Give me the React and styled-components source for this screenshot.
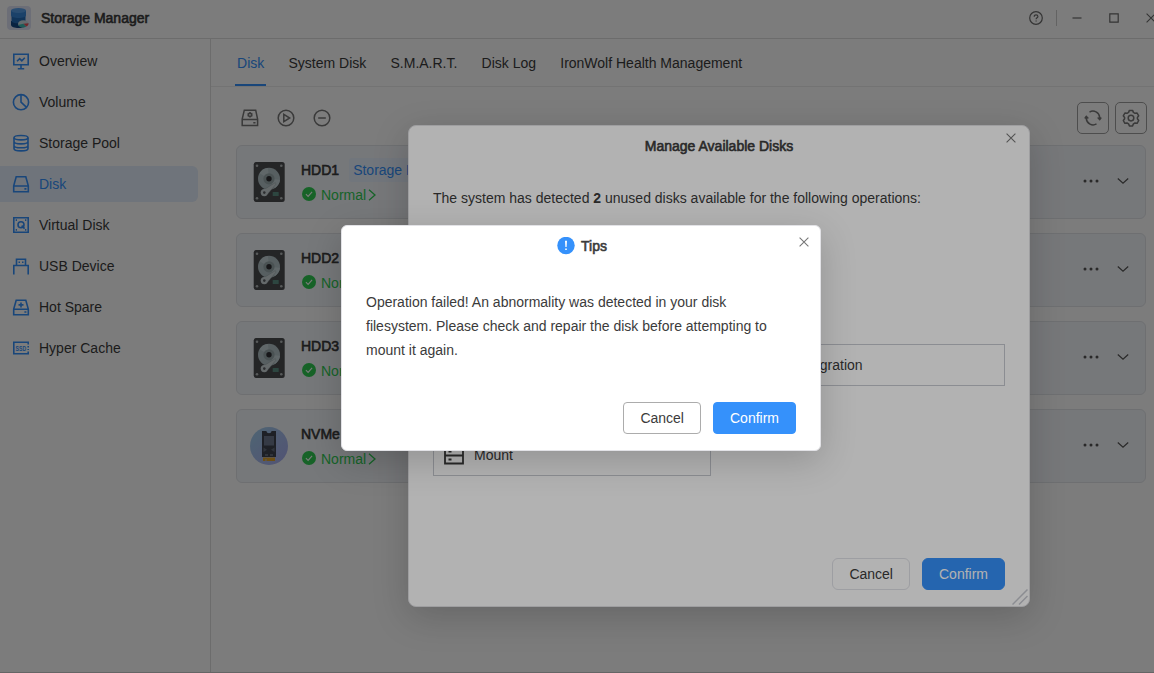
import React from "react";
import styled, { createGlobalStyle } from "styled-components";

const MENU = [
  { icon: "overview", label: "Overview" },
  { icon: "volume", label: "Volume" },
  { icon: "pool", label: "Storage Pool" },
  { icon: "disk", label: "Disk" },
  { icon: "virtual", label: "Virtual Disk" },
  { icon: "usb", label: "USB Device" },
  { icon: "spare", label: "Hot Spare" },
  { icon: "cache", label: "Hyper Cache" },
];

const TABS = ["Disk", "System Disk", "S.M.A.R.T.", "Disk Log", "IronWolf Health Management"];

const DISKS = [
  { name: "HDD1", tag: "Storage Pool" },
  { name: "HDD2" },
  { name: "HDD3" },
  { name: "NVMe", nvme: true },
];

const menuIcons = {
  overview: (
    <>
      <path d="M1.8 2.200h14.400v10.600H1.800zM9 13v3.500M5.800 16.700h6.400" />
      <path d="M5 9.300 7.700 6.600 9.800 8.800 12.800 5.800" />
    </>
  ),
  volume: (
    <>
      <circle cx="9" cy="9.200" r="7.600" />
      <path d="M9 1.500v7.700l5.600 5.200" />
    </>
  ),
  pool: (
    <>
      <ellipse cx="9" cy="3.700" rx="7" ry="2.200" />
      <path d="M2 3.700v10.800c0 1.300 3 2.400 7 2.400s7-1.100 7-2.400V3.700M2 7.600c0 1.300 3 2.300 7 2.300s7-1 7-2.300M2 11.400c0 1.300 3 2.300 7 2.300s7-1 7-2.300" />
    </>
  ),
  disk: (
    <path d="M4.200 1.800h9.600l2.500 9v5.900H1.700v-5.900zM1.700 11h14.600M12.400 13.900h2" />
  ),
  virtual: (
    <>
      <path d="M1.800 1.800h14.400v14.400H1.800z" />
      <circle cx="9" cy="8.700" r="3" />
      <path d="M9.600 9.600l3 3M3.700 4.100h1.300M13 4.100h1.300M3.700 13.900h1.300M13 13.900h1.300" />
    </>
  ),
  usb: (
    <path d="M4.500 8V2.200h9V8M1.800 17.500V8.500h14.400v9M6.500 5.300h1.500M10 5.300h1.500" />
  ),
  spare: (
    <path d="M4.200 2.300h9.600l2.500 8.700v5.700H1.700V11zM1.700 11.300h14.600M12.400 14h2M9 4.400v5M6.500 6.900h5" />
  ),
  cache: (
    <>
      <path d="M16.200 5.500V3.200H1.800v11.600h14.400V12.500M16.200 7v1.500M16.200 10v1" />
      <text x="3.600" y="11.700" fontSize="7.500" fontWeight="700" textLength="10.500" lengthAdjust="spacingAndGlyphs" fill="currentColor" stroke="none">
        SSD
      </text>
    </>
  ),
};

const AppLogo = () => (
  <svg width="24" height="24" viewBox="0 0 24 24">
    <rect width="24" height="24" rx="4" fill="#dfe3f5" />
    <path d="M4 15v4c0 1.700 3.500 3 7.500 3s7.500-1.300 7.500-3v-4z" fill="#154a86" />
    <path d="M4.500 9v6c0 1.400 3.200 2.300 7 2.300s7-.9 7-2.300V9z" fill="#246cb8" />
    <path d="M4 4.500v4.800C4 11 7.500 12 11.500 12S19 11 19 9.300V4.500z" fill="#3a86d8" />
    <ellipse cx="11.500" cy="4.500" rx="7.500" ry="2.500" fill="#5aa0ea" />
    <ellipse cx="16.300" cy="17.800" rx="5.300" ry="3.600" fill="#c8dde4" />
    <path d="M16.300 17.800l5.300-.5c0 1.500-1 2.700-2.300 3.200z" fill="#e8505a" />
    <path d="M11.200 19c1 2.500 5.500 3.200 8 1.800l-2.900-3z" fill="#38bdb5" />
  </svg>
);

const HddIcon = () => (
  <svg width="32" height="40" viewBox="0 0 32 40">
    <rect x=".7" width="31" height="40" rx="2.500" fill="#4b4d50" />
    <g fill="#b4b9bb">
      <circle cx="4" cy="3.800" r="1.300" />
      <circle cx="28.300" cy="3.800" r="1.300" />
      <circle cx="4" cy="36.300" r="1.300" />
      <circle cx="28.300" cy="36.300" r="1.300" />
    </g>
    <circle cx="16" cy="16.800" r="11" fill="#b3c3c7" />
    <path d="M16 16.800L6.500 11.300A11 11 0 0 1 15 5.900zM16 16.800L27 17.800A11 11 0 0 1 22 26z" fill="#c6d5d8" />
    <circle cx="16" cy="16.800" r="5.600" fill="#9aa9ad" />
    <circle cx="16" cy="16.800" r="2.700" fill="#303236" />
    <path d="M22.300 20.600l.7 1.500-8.300 10-5.500-3.300z" fill="#cfd9dc" stroke="#8b979a" strokeWidth=".4" />
    <circle cx="11.300" cy="30.600" r="3.600" fill="#cfd9dc" />
    <circle cx="11.300" cy="30.600" r="1.300" fill="#5b5f63" />
    <rect x="19.700" y="30" width="6" height="4" rx=".5" fill="#5d9184" />
  </svg>
);

const NvmeIcon = () => (
  <svg width="38" height="38" viewBox="0 0 38 38">
    <defs>
      <linearGradient id="nvme" x1="0" y1="0" x2="1" y2="1">
        <stop offset="0" stopColor="#a2d0ec" />
        <stop offset="1" stopColor="#a9abee" />
      </linearGradient>
    </defs>
    <circle cx="19" cy="19" r="19" fill="url(#nvme)" />
    <path d="M12 4h4.500c0 3 5 3 5 0H26v26H12z" fill="#3f4450" />
    <rect x="14" y="9" width="10" height="9.500" fill="#6d7790" />
    <path d="M13.500 20.500l3.500 2.300-3.500 2.300zM24.500 20.500L21 22.800l3.500 2.300zM15 27h3v2h-3zM20 27h3v2h-3z" fill="#656c7c" />
    <path d="M13 30.500h12V34h-8.500v-2h-1v2H13z" fill="#e0a42c" />
  </svg>
);

const Check = () => (
  <svg width="14" height="14" viewBox="0 0 14 14">
    <circle cx="7" cy="7" r="7" fill="#30cc54" />
    <path d="M3.900 7.200l2.200 2.200 4-4.600" stroke="#fff" strokeWidth="1.100" fill="none" />
  </svg>
);

const Close = () => (
  <svg width="10" height="10" viewBox="0 0 10 10" fill="none" stroke="currentColor" strokeWidth="1.100">
    <path d="M.6.6l8.800 8.800M9.400.6L.6 9.400" />
  </svg>
);

const DiskCard = ({ name, tag, nvme }) => (
  <Card>
    <Thumb>{nvme ? <NvmeIcon /> : <HddIcon />}</Thumb>
    <CardInfo>
      <CardLine>
        <Strong>{name}</Strong>
        {tag && <Tag>{tag}</Tag>}
      </CardLine>
      <Status>
        <Check />
        <span>Normal</span>
        <svg width="8" height="12" viewBox="0 0 8 12" fill="none" stroke="currentColor" strokeWidth="1.300">
          <path d="M1 .8l6 5.200-6 5.200" />
        </svg>
      </Status>
    </CardInfo>
    <CardActions>
      <svg width="16" height="4" viewBox="0 0 16 4" fill="currentColor">
        <circle cx="2" cy="2" r="1.500" />
        <circle cx="8" cy="2" r="1.500" />
        <circle cx="14" cy="2" r="1.500" />
      </svg>
      <svg width="12" height="8" viewBox="0 0 12 8" fill="none" stroke="currentColor" strokeWidth="1.200">
        <path d="M.8 1.500L6 6.300l5.200-4.800" />
      </svg>
    </CardActions>
  </Card>
);

const App = () => {
  return (
    <Window>
      <GlobalStyle />
      <Header>
        <AppLogo />
        <Strong>Storage Manager</Strong>
        <WindowControls>
          <svg width="14" height="14" viewBox="0 0 14 14" fill="none" stroke="currentColor" strokeWidth="1.200">
            <circle cx="7" cy="7" r="6.300" />
            <path d="M5.200 5.700c0-2.500 3.700-2.300 3.700-.2 0 1.300-1.800 1.400-1.800 2.800M7.100 9.500v1.100" />
          </svg>
          <ControlDivider />
          <svg width="10" height="10" viewBox="0 0 10 10" stroke="currentColor" strokeWidth="1.200">
            <path d="M.5 5h9" />
          </svg>
          <svg width="10" height="10" viewBox="0 0 10 10" fill="none" stroke="currentColor" strokeWidth="1.200">
            <path d="M.8.8h8.400v8.400H.8z" />
          </svg>
          <Close />
        </WindowControls>
      </Header>
      <Body>
        <Sidebar>
          {MENU.map(({ icon, label }) => (
            <MenuItem key={label} $active={label === "Disk"}>
              <MenuIcon viewBox="0 0 18 18">{menuIcons[icon]}</MenuIcon>
              {label}
            </MenuItem>
          ))}
        </Sidebar>
        <Main>
          <Tabs>
            {TABS.map((tab) => (
              <Tab key={tab} $active={tab === "Disk"}>{tab}</Tab>
            ))}
          </Tabs>
          <Toolbar>
            <ToolIcon viewBox="0 0 18 18">
              <path d="M3.300 1.200h11.400l1.900 9v6.300H1.200v-6.300zM1.200 10.400h15.400M12.300 13.700h2.200" />
              <circle cx="9" cy="5.800" r="1.600" />
              <path d="M9 3.100v1M9 7.500v1M6.600 4.500l.9.500M10.500 6.600l.9.500M11.400 4.500l-.9.500M7.500 6.600l-.9.500" />
            </ToolIcon>
            <ToolIcon viewBox="0 0 18 18">
              <circle cx="9" cy="9" r="7.800" />
              <path d="M6.800 5.300v7.400L12.700 9z" />
            </ToolIcon>
            <ToolIcon viewBox="0 0 18 18">
              <circle cx="9" cy="9" r="7.800" />
              <path d="M5.200 9h7.600" />
            </ToolIcon>
            <ToolButtons>
              <SquareButton>
                <ToolIcon viewBox="0 0 18 18">
                  <path d="M5.500 3.100a6.800 6.800 0 0 1 10.200 5.300v1.800M12.500 14.900A6.800 6.800 0 0 1 2.300 9.600V7.800" />
                  <path d="M13.700 8.400l2 2.100 1.500-2M.8 9.500l1.500-2 2 2.100" />
                </ToolIcon>
              </SquareButton>
              <SquareButton>
                <ToolIcon viewBox="0 0 18 18">
                  <path d="M7.400 1.400h3.200l.8 2 1.600.9 2.100-.3 1.600 2.800-1.300 1.700v1.300l1.300 1.700-1.600 2.800-2.100-.3-1.600.9-.8 2H7.400l-.8-2-1.600-.9-2.100.3-1.600-2.800 1.300-1.700V8.500L1.300 6.800 2.900 4l2.100.3 1.600-.9z" strokeLinejoin="round" />
                  <circle cx="9" cy="9.100" r="2.800" />
                </ToolIcon>
              </SquareButton>
            </ToolButtons>
          </Toolbar>
          <DiskList>
            {DISKS.map((disk) => (
              <DiskCard key={disk.name} {...disk} />
            ))}
          </DiskList>
        </Main>
      </Body>

      <Mask />
      <ManageDialog>
        <DialogTitle>
          <Strong>Manage Available Disks</Strong>
        </DialogTitle>
        <CloseButton $top="7px" $right="13px">
          <Close />
        </CloseButton>
        <DialogText>
          The system has detected <b>2</b> unused disks available for the following operations:
        </DialogText>
        <Options>
          <Option $column="2" $indent="77px">Migration</Option>
          <Option $column="1" $indent="10px">
            <svg width="20" height="20" viewBox="0 0 20 20" fill="none" stroke="currentColor" strokeWidth="1.800">
              <path d="M1 1.500h18v17H1zM1 10.500h18" />
              <path d="M4.500 6.500h3M4.500 14.500h3" />
            </svg>
            Mount
          </Option>
        </Options>
        <DialogFooter>
          <Button $border="#e1e2e8" $radius="6px">Cancel</Button>
          <Button $primary $radius="6px">Confirm</Button>
        </DialogFooter>
        <ResizeGrip viewBox="0 0 16 16">
          <path d="M.5 15.500L15.500.5M7 15.500l8.500-8.500" />
        </ResizeGrip>
      </ManageDialog>

      <Mask />
      <TipsDialog>
        <DialogTitle $shift="2px">
          <svg width="18" height="18" viewBox="0 0 18 18">
            <circle cx="9" cy="8.500" r="8.700" fill="#3591fb" />
            <path d="M8 3.700h2l-.4 6.300H8.400zM8.200 11.500h1.600v1.600H8.200z" fill="#fff" />
          </svg>
          <Strong>Tips</Strong>
        </DialogTitle>
        <CloseButton $top="11px" $right="11px">
          <Close />
        </CloseButton>
        <TipsText>
          Operation failed! An abnormality was detected in your disk filesystem. Please check and
          repair the disk before attempting to mount it again.
        </TipsText>
        <DialogFooter>
          <Button $border="#acacac" $radius="4px">Cancel</Button>
          <Button $primary $radius="4px">Confirm</Button>
        </DialogFooter>
      </TipsDialog>
    </Window>
  );
};

export default App;

const GlobalStyle = createGlobalStyle`
  * {
    box-sizing: border-box;
  }
  body {
    margin: 0;
    font-family: "Liberation Sans", Arial, sans-serif;
    font-size: 14px;
    color: #3b3b3b;
  }
  svg {
    flex-shrink: 0;
    display: block;
  }
`;

const Window = styled.div`
  position: relative;
  display: flex;
  flex-direction: column;
  height: 673px;
  overflow: hidden;
  background: #fff;
`;
const Header = styled.header`
  display: flex;
  align-items: center;
  gap: 10px;
  height: 39px;
  padding: 0 0 3px 7px;
  border-bottom: 1px solid #dfdfdf;
`;
const Strong = styled.span`
  -webkit-text-stroke: 0.6px currentColor;
`;
const WindowControls = styled.div`
  display: flex;
  align-items: center;
  gap: 27px;
  margin-left: auto;
  margin-right: -2px;
  color: #6c6c6c;
`;
const ControlDivider = styled.span`
  width: 1px;
  height: 16px;
  margin: 0 -12px 0 -14px;
  background: #ccc;
`;
const Body = styled.div`
  display: flex;
  flex: 1;
  min-height: 0;
  border-bottom: 1px solid #d0d0d0;
`;
const Sidebar = styled.nav`
  display: flex;
  flex-direction: column;
  gap: 5px;
  width: 211px;
  padding: 4px 12px 0 0;
  border-right: 1px solid #dfdfdf;
`;
const MenuItem = styled.div`
  display: flex;
  align-items: center;
  gap: 9px;
  height: 36px;
  padding-left: 12px;
  border-radius: 0 6px 6px 0;
  color: ${(props) => (props.$active ? "#3591fb" : "#3b3b3b")};
  background: ${(props) => (props.$active ? "#e4effd" : "transparent")};
`;
const MenuIcon = styled.svg`
  width: 18px;
  height: 18px;
  color: #3591fb;
  fill: none;
  stroke: currentColor;
  stroke-width: 1.6;
`;
const Main = styled.main`
  display: flex;
  flex-direction: column;
  flex: 1;
`;
const Tabs = styled.div`
  display: flex;
  gap: 20px;
  height: 48px;
  padding-left: 24px;
  border-bottom: 1px solid #ededed;
`;
const Tab = styled.div`
  padding: 0 2.1px;
  line-height: 48px;
  height: 47px;
  color: ${(props) => (props.$active ? "#3591fb" : "#3b3b3b")};
  border-bottom: 2px solid ${(props) => (props.$active ? "#3591fb" : "transparent")};
`;
const Toolbar = styled.div`
  display: flex;
  align-items: center;
  gap: 18px;
  height: 58px;
  padding: 4px 7px 0 30px;
`;
const ToolIcon = styled.svg`
  width: 18px;
  height: 18px;
  color: #777;
  fill: none;
  stroke: currentColor;
  stroke-width: 1.5;
`;
const ToolButtons = styled.div`
  display: flex;
  gap: 6px;
  margin-left: auto;
`;
const SquareButton = styled.button`
  display: flex;
  align-items: center;
  justify-content: center;
  width: 32px;
  height: 32px;
  padding: 0;
  border: 1px solid #a0a0a0;
  border-radius: 5px;
  background: transparent;
`;
const DiskList = styled.div`
  display: flex;
  flex-direction: column;
  gap: 14px;
  padding: 0 8px 0 25px;
`;
const Card = styled.div`
  display: flex;
  align-items: center;
  height: 74px;
  border: 1px solid #e2e5ea;
  border-radius: 6px;
  background: #f4f7fb;
`;
const Thumb = styled.div`
  display: flex;
  justify-content: center;
  width: 64px;
`;
const CardInfo = styled.div`
  display: flex;
  flex-direction: column;
  gap: 1px;
`;
const CardLine = styled.div`
  display: flex;
  align-items: center;
  gap: 10px;
  height: 24px;
`;
const Tag = styled.span`
  padding: 0 4px;
  line-height: 24px;
  border-radius: 2px;
  color: #3591fb;
  background: #eaf3ff;
`;
const Status = styled.div`
  display: flex;
  align-items: center;
  height: 24px;
  padding-left: 1px;
  color: #30cc54;
  svg:first-child {
    margin-bottom: 1px;
  }
  span {
    margin: 0 2px 0 5px;
  }
`;
const CardActions = styled.div`
  display: flex;
  align-items: center;
  gap: 18px;
  margin-left: auto;
  padding: 0 16px 2px 0;
  color: #555;
`;
const Mask = styled.div`
  position: absolute;
  inset: 0;
  background: rgba(0, 0, 0, 0.3);
`;
const Dialog = styled.section`
  position: absolute;
  display: flex;
  flex-direction: column;
  padding: 0 24px 16px;
  background: #fff;
  border: 1px solid #e2e2e6;
  box-shadow: 0 10px 36px rgba(0, 0, 0, 0.18);
`;
const ManageDialog = styled(Dialog)`
  left: 408px;
  top: 125px;
  width: 622px;
  height: 482px;
  border-radius: 8px;
`;
const TipsDialog = styled(Dialog)`
  left: 341px;
  top: 225px;
  width: 480px;
  height: 226px;
  border-radius: 6px;
`;
const DialogTitle = styled.div`
  display: flex;
  align-items: center;
  justify-content: center;
  gap: 6px;
  height: 40px;
  padding-left: ${(props) => props.$shift || 0};
`;
const CloseButton = styled.span`
  position: absolute;
  top: ${(props) => props.$top};
  right: ${(props) => props.$right};
  color: #777;
`;
const DialogText = styled.p`
  margin: 20px 0 0;
  line-height: 24px;
`;
const TipsText = styled.p`
  margin: 24px 0 0;
  line-height: 24px;
`;
const Options = styled.div`
  display: grid;
  grid-template-columns: 278px 278px;
  gap: 48px 16px;
  margin-top: 134px;
`;
const Option = styled.div`
  display: flex;
  align-items: center;
  gap: 10px;
  grid-column: ${(props) => props.$column};
  height: 42px;
  padding-left: ${(props) => props.$indent};
  border: 1px solid #c8cad2;
`;
const DialogFooter = styled.div`
  display: flex;
  justify-content: flex-end;
  gap: 12px;
  margin-top: auto;
`;
const Button = styled.button`
  height: 32px;
  padding: 0 16px;
  font: inherit;
  color: ${(props) => (props.$primary ? "#fff" : "#3b3b3b")};
  background: ${(props) => (props.$primary ? "#3591fb" : "#fff")};
  border: 1px solid ${(props) => (props.$primary ? "#3591fb" : props.$border)};
  border-radius: ${(props) => props.$radius};
`;
const ResizeGrip = styled.svg`
  position: absolute;
  right: 1px;
  bottom: 1px;
  width: 16px;
  height: 16px;
  fill: none;
  stroke: #c8cad2;
  stroke-width: 1.5;
`;
